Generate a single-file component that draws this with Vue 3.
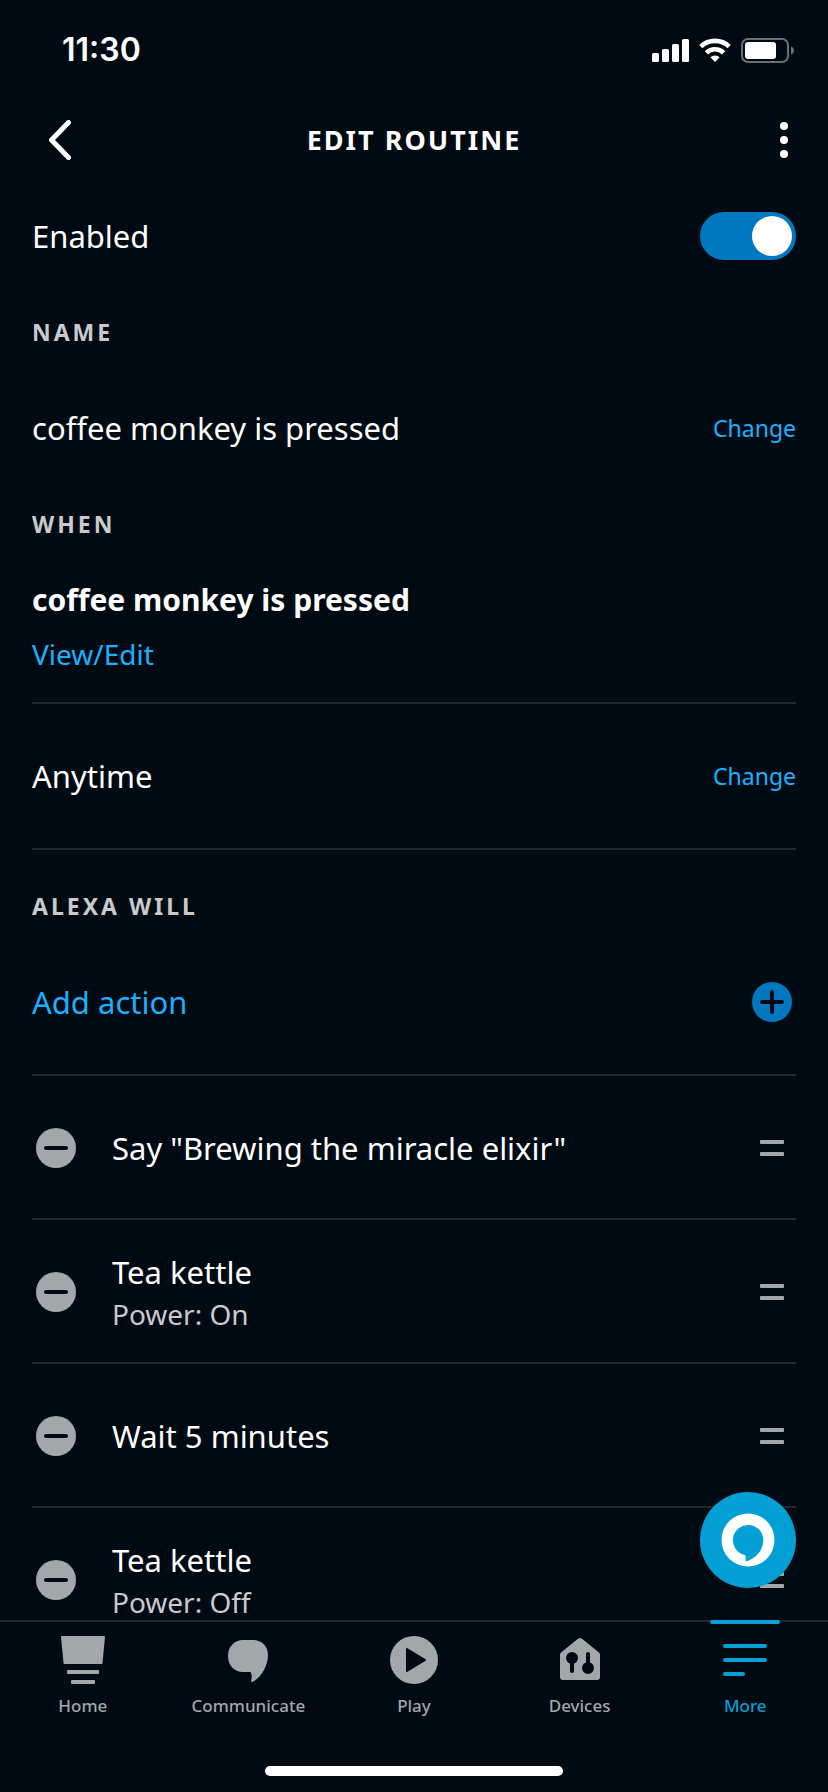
<script setup>
import { ref } from 'vue'

const enabled = ref(true)

const actions = [
  { id: 1, title: 'Say "Brewing the miracle elixir"' },
  { id: 2, title: 'Tea kettle', detail: 'Power: On' },
  { id: 3, title: 'Wait 5 minutes' },
  { id: 4, title: 'Tea kettle', detail: 'Power: Off' },
]
</script>

<template>
  <div class="screen">
    <div class="status-bar">
      <span class="clock">11:30</span>
      <div class="status-icons">
        <svg width="37" height="24" viewBox="0 0 37 24" fill="#fff" aria-hidden="true">
          <rect x="0" y="15" width="7" height="9" rx="1.5" />
          <rect x="10" y="11" width="7" height="13" rx="1.5" />
          <rect x="20" y="6" width="7" height="18" rx="1.5" />
          <rect x="30" y="1" width="7" height="23" rx="1.5" />
        </svg>
        <svg width="32" height="24" viewBox="0 0 32 24" aria-hidden="true">
          <g fill="none" stroke="#fff" stroke-width="4.6">
            <path d="M1.8 8.6A20.5 20.5 0 0 1 30.2 8.6" />
            <path d="M7.4 14.8A12.3 12.3 0 0 1 24.6 14.8" />
          </g>
          <path fill="#fff" d="M16 24l-4.6-4.7a6.8 6.8 0 0 1 9.2 0z" />
        </svg>
        <svg width="53" height="25" viewBox="0 0 53 25" aria-hidden="true">
          <rect x="1" y="1" width="46" height="23" rx="6" fill="none" stroke="#6b7075" stroke-width="2" />
          <rect x="4" y="4" width="31" height="17" rx="3" fill="#fff" />
          <path fill="#6b7075" d="M50 8.500q3 1.200 3 4t-3 4z" />
        </svg>
      </div>
    </div>

    <header class="top-bar">
      <button class="icon-button back" type="button" aria-label="Back">
        <svg width="24" height="40" viewBox="0 0 24 40" fill="none" stroke="#fff" stroke-width="5" stroke-linecap="round" stroke-linejoin="round">
          <path d="M20.500 2.500L3.500 20L20.500 37.500" />
        </svg>
      </button>
      <h1>EDIT ROUTINE</h1>
      <button class="icon-button more-options" type="button" aria-label="Options">
        <svg width="8" height="36" viewBox="0 0 8 36" fill="#fff">
          <circle cx="4" cy="4" r="4" />
          <circle cx="4" cy="18" r="4" />
          <circle cx="4" cy="32" r="4" />
        </svg>
      </button>
    </header>

    <div class="body">
      <main class="content">
        <div class="row">
          <label for="enabled">Enabled</label>
          <input id="enabled" v-model="enabled" class="toggle" type="checkbox" role="switch" />
        </div>

        <h2>NAME</h2>
        <div class="row">
          <span>coffee monkey is pressed</span>
          <a class="change" href="#name">Change</a>
        </div>

        <h2>WHEN</h2>
        <div class="trigger">
          <strong>coffee monkey is pressed</strong>
          <a href="#trigger">View/Edit</a>
        </div>
        <div class="row tall">
          <span>Anytime</span>
          <a class="change" href="#time">Change</a>
        </div>

        <h2 class="compact">ALEXA WILL</h2>
        <button class="row tall add" type="button">
          <span>Add action</span>
          <svg class="add-icon" width="40" height="40" viewBox="0 0 40 40" aria-hidden="true">
            <circle cx="20" cy="20" r="20" fill="#0077bf" />
            <path d="M10 20H30M20 10V30" stroke="#000a12" stroke-width="4" stroke-linecap="round" />
          </svg>
        </button>

        <ul class="actions">
          <li v-for="action in actions" :key="action.id">
            <button class="icon-button" type="button" :aria-label="`Remove ${action.title}`">
              <svg width="40" height="40" viewBox="0 0 40 40">
                <circle cx="20" cy="20" r="20" fill="#a2a7aa" />
                <path d="M10 20H30" stroke="#000a12" stroke-width="4" stroke-linecap="round" />
              </svg>
            </button>
            <div class="action-text">
              <span>{{ action.title }}</span>
              <small v-if="action.detail">{{ action.detail }}</small>
            </div>
            <button class="icon-button" type="button" :aria-label="`Reorder ${action.title}`">
              <svg width="24" height="16" viewBox="0 0 24 16" fill="#a2a7aa">
                <rect width="24" height="4" rx="1" />
                <rect y="12" width="24" height="4" rx="1" />
              </svg>
            </button>
          </li>
        </ul>
      </main>

      <button class="alexa" type="button" aria-label="Alexa">
        <svg width="96" height="96" viewBox="0 0 96 96">
          <circle cx="48" cy="48" r="48" fill="#049fd4" />
          <circle cx="48" cy="48" r="26.500" fill="#fff" />
          <path fill="#049fd4" d="M45.700 69.500V65c0-1.500-.5-2-2-2.300A15.200 15.200 0 1 1 63.300 48c0 10-7 18.500-17.600 21.500z" />
        </svg>
      </button>
    </div>

    <footer>
      <nav class="tabs">
        <a href="#home">
          <svg width="48" height="48" viewBox="0 0 48 48" fill="currentColor">
            <path d="M3 0H45a1 1 0 0 1 1 1L43.500 27a1 1 0 0 1-1 1H5.500a1 1 0 0 1-1-1L2 1a1 1 0 0 1 1-1z" />
            <rect x="8" y="34" width="32" height="4" rx="1" />
            <rect x="12" y="44" width="24" height="4" rx="1" />
          </svg>
          <span>Home</span>
        </a>
        <a href="#communicate">
          <svg width="48" height="48" viewBox="0 0 48 48" fill="currentColor">
            <path d="M19 4H29C38 4 44 10.500 44 19C44 30 37 42 28.500 45.800Q27 46.400 27 45C28 41 28 38 26.500 36H19C10 36 4 29 4 20S10 4 19 4z" />
          </svg>
          <span>Communicate</span>
        </a>
        <a href="#play">
          <svg width="48" height="48" viewBox="0 0 48 48" fill="currentColor">
            <circle cx="24" cy="24" r="24" />
            <path d="M17 13L35 24L17 35z" fill="#000a12" stroke="#000a12" stroke-width="2" stroke-linejoin="round" />
          </svg>
          <span>Play</span>
        </a>
        <a href="#devices">
          <svg width="48" height="48" viewBox="0 0 48 48" fill="currentColor">
            <path d="M22 2.800Q24 1.200 26 2.800L43 16.500Q44 17.300 44 18.500V41a3 3 0 0 1-3 3H7a3 3 0 0 1-3-3V18.500Q4 17.300 5 16.500z" />
            <g fill="#000a12" stroke="#000a12" stroke-width="4" stroke-linecap="round">
              <circle cx="16" cy="22" r="4" />
              <path d="M16 22V35" />
              <circle cx="32" cy="32" r="4" />
              <path d="M32 32V18" />
            </g>
          </svg>
          <span>Devices</span>
        </a>
        <a href="#more" class="active" aria-current="page">
          <svg width="48" height="48" viewBox="0 0 48 48" fill="currentColor">
            <rect x="2" y="8" width="44" height="4" rx="2" />
            <rect x="2" y="22" width="44" height="4" rx="2" />
            <rect x="2" y="36" width="22" height="4" rx="2" />
          </svg>
          <span>More</span>
        </a>
      </nav>
      <div class="home-indicator"></div>
    </footer>
  </div>
</template>

<style>
body {
  margin: 0;
  background: #000a12;
}
</style>

<style scoped>
.screen {
  display: flex;
  flex-direction: column;
  height: 100vh;
  overflow: hidden;
  background: #000a12;
  color: #fff;
  font-family: "Noto Sans", "Open Sans", sans-serif;
  font-size: 31px;
  line-height: 44px;
}

.screen *,
.screen *::before {
  box-sizing: border-box;
}

button {
  border: 0;
  background: none;
  color: inherit;
  font: inherit;
  cursor: pointer;
}

a {
  color: #1bb1ff;
  text-decoration: none;
}

svg {
  display: block;
}

.status-bar {
  display: flex;
  flex: none;
  align-items: center;
  justify-content: space-between;
  height: 92px;
  padding: 8px 34px 0 62px;
}

.clock {
  font-family: Inter, sans-serif;
  font-size: 32px;
  font-weight: 600;
}

.status-icons {
  display: flex;
  align-items: center;
  gap: 10px;
}

.top-bar {
  display: grid;
  flex: none;
  grid-template-columns: 64px 1fr 64px;
  align-items: center;
  height: 96px;
  padding: 0 32px;
}

h1 {
  margin: 0;
  font-size: 27px;
  font-weight: 700;
  letter-spacing: 2px;
  text-align: center;
}

.icon-button {
  display: flex;
  padding: 0;
}

.back {
  padding-left: 16px;
}

.more-options {
  justify-content: flex-end;
  padding-right: 8px;
}

.body {
  position: relative;
  flex: 1;
  min-height: 0;
}

.content {
  height: 100%;
  padding: 0 32px;
  overflow-y: auto;
  scrollbar-width: none;
}

.row {
  display: flex;
  align-items: center;
  justify-content: space-between;
  width: 100%;
  min-height: 96px;
}

.row.tall {
  min-height: 146px;
  border-bottom: 2px solid #22272e;
}

.toggle {
  display: flex;
  align-items: center;
  width: 96px;
  height: 48px;
  margin: 0;
  padding: 4px;
  border-radius: 24px;
  appearance: none;
  background: #4a5158;
  cursor: pointer;
}

.toggle::before {
  width: 40px;
  height: 40px;
  border-radius: 50%;
  background: #fff;
  content: "";
}

.toggle:checked {
  justify-content: flex-end;
  background: #0077bf;
}

h2 {
  margin: 0;
  padding: 24px 0;
  color: #c8cacb;
  font-size: 23px;
  font-weight: 700;
  letter-spacing: 3px;
  line-height: 48px;
}

h2.compact {
  padding: 32px 0 0;
}

.change {
  font-size: 23px;
}

.trigger {
  display: flex;
  flex-direction: column;
  align-items: flex-start;
  gap: 12px;
  padding: 6px 0 28px;
  border-bottom: 2px solid #22272e;
}

.trigger strong {
  font-size: 30px;
}

.trigger a {
  font-size: 28px;
  line-height: 40px;
}

.add {
  padding: 0 4px 0 0;
  color: #1bb1ff;
  text-align: left;
}

.actions {
  margin: 0;
  padding: 0;
  list-style: none;
}

.actions li {
  display: flex;
  align-items: center;
  min-height: 144px;
  padding: 0 12px 0 4px;
  box-shadow: inset 0 -2px #22272e;
}

.action-text {
  display: flex;
  flex: 1;
  flex-direction: column;
  padding: 0 36px;
}

small {
  color: #c8cacb;
  font-size: 28px;
  line-height: 40px;
}

.alexa {
  position: absolute;
  right: 32px;
  bottom: 32px;
  padding: 0;
  border-radius: 50%;
}

footer {
  flex: none;
  padding-bottom: 16px;
  border-top: 2px solid #22272e;
}

.tabs {
  display: grid;
  grid-template-columns: repeat(5, 1fr);
}

.tabs a {
  position: relative;
  display: flex;
  flex-direction: column;
  align-items: center;
  gap: 10px;
  padding: 14px 0 48px;
  color: #a2a7aa;
  font-size: 17px;
  font-weight: 500;
  line-height: 24px;
}

.tabs .active {
  color: #049fd4;
}

.active::before {
  position: absolute;
  top: -2px;
  width: 70px;
  height: 4px;
  border-radius: 2px;
  background: #049fd4;
  content: "";
}

.home-indicator {
  width: 36%;
  height: 10px;
  margin: 0 auto;
  border-radius: 5px;
  background: #fff;
}
</style>
